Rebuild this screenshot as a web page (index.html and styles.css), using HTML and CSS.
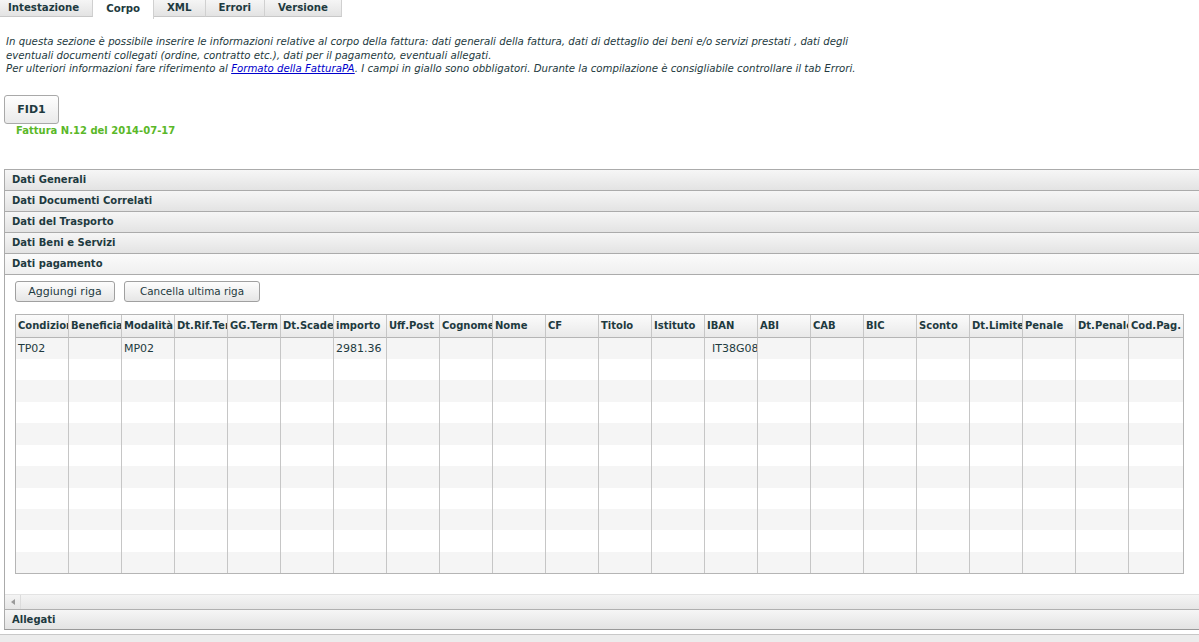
FILE: index.html
```html
<!DOCTYPE html>
<html lang="it">
<head>
<meta charset="utf-8">
<title>Corpo</title>
<link rel="stylesheet" href="styles.css">
</head>
<body>
<ul class="tab-nav">
  <li class="tab">Intestazione</li>
  <li class="tab active">Corpo</li>
  <li class="tab">XML</li>
  <li class="tab">Errori</li>
  <li class="tab">Versione</li>
</ul>
<div class="tab-panel">
  <p class="intro">In questa sezione è possibile inserire le informazioni relative al corpo della fattura: dati generali della fattura, dati di dettaglio dei beni e/o servizi prestati , dati degli<br>eventuali documenti collegati (ordine, contratto etc.), dati per il pagamento, eventuali allegati.<br>Per ulteriori informazioni fare riferimento al <a href="#" class="link">Formato della FatturaPA</a>. I campi in giallo sono obbligatori. Durante la compilazione è consigliabile controllare il tab Errori.</p>
  <button class="fid-btn">FID1</button>
  <div class="invoice">Fattura N.12 del 2014-07-17</div>

  <div class="accordion">
    <h3 class="acc-head">Dati Generali</h3>
    <h3 class="acc-head">Dati Documenti Correlati</h3>
    <h3 class="acc-head">Dati del Trasporto</h3>
    <h3 class="acc-head">Dati Beni e Servizi</h3>
    <h3 class="acc-head open">Dati pagamento</h3>
    <div class="acc-content">
      <div class="toolbar">
        <button class="btn btn-add">Aggiungi riga</button>
        <button class="btn btn-del">Cancella ultima riga</button>
      </div>
      <div class="grid">
        <div class="th">Condizioni</div><div class="th">Beneficiario</div><div class="th">Modalità</div><div class="th">Dt.Rif.Term</div><div class="th">GG.Term</div><div class="th">Dt.Scadenza</div><div class="th">importo</div><div class="th">Uff.Post</div><div class="th">Cognome</div><div class="th">Nome</div><div class="th">CF</div><div class="th">Titolo</div><div class="th">Istituto</div><div class="th">IBAN</div><div class="th">ABI</div><div class="th">CAB</div><div class="th">BIC</div><div class="th">Sconto</div><div class="th">Dt.Limite</div><div class="th">Penale</div><div class="th">Dt.Penale</div><div class="th">Cod.Pag.</div>
      </div>
      <div class="hscroll"><span class="hs-arrow"></span></div>
    </div>
    <h3 class="acc-head last">Allegati</h3>
  </div>
  <div class="footer-bar"></div>
</div>
<script src="app.js"></script>
</body>
</html>
```

FILE: app.js
```js
(function () {
  var grid = document.querySelector('.grid');
  var first = ['TP02', '', 'MP02', '', '', '', '2981.36', '', '', '', '', '', '', 'IT38G0800000292100645211', '', '', '', '', '', '', '', ''];
  for (var r = 0; r < 11; r++) {
    for (var c = 0; c < 22; c++) {
      var d = document.createElement('div');
      d.className = 'td' + (r % 2 === 0 ? ' odd' : '') + (c === 13 ? ' iban' : '');
      d.textContent = r === 0 ? first[c] : '';
      grid.appendChild(d);
    }
  }
})();
```

FILE: styles.css
```css
* { box-sizing: border-box; }

body {
  margin: 0;
  font-family: "DejaVu Sans", Verdana, sans-serif;
  color: #1e3a40;
  background: #fff;
  overflow: hidden;
}

.tab-nav {
  display: flex;
  align-items: flex-start;
  list-style: none;
  margin: 0;
  padding: 0;
  height: 19px;
}

.tab {
  height: 17px;
  line-height: 15px;
  padding: 0 13px;
  font-size: 10.2px;
  font-weight: bold;
  color: #1e3a40;
  background: linear-gradient(#f5f5f5, #e3e3e3);
  border-right: 1px solid #d0d0d0;
  border-bottom: 1px solid #c8c8c8;
}

.tab:first-child { padding-left: 8px; padding-right: 13px; }

.tab.active {
  height: 19px;
  line-height: 18px;
  background: #fff;
  border-bottom: none;
}

.intro {
  margin: 16px 0 0 6px;
  font-size: 10.2px;
  font-style: italic;
  line-height: 13.5px;
  color: #243a40;
}

.link { color: #0000cc; text-decoration: underline; }

.fid-btn {
  display: block;
  margin: 19px 0 0 4px;
  width: 55px;
  height: 29px;
  padding: 0;
  font-family: inherit;
  font-size: 11px;
  font-weight: bold;
  color: #1e3a40;
  border: 1px solid #a9a9a9;
  border-radius: 3px;
  background: linear-gradient(#fefefe, #eaeaea);
}

.invoice {
  margin-left: 16px;
  height: 13px;
  line-height: 13px;
  font-size: 10px;
  font-weight: bold;
  color: #5ab828;
}

.accordion {
  margin: 32px -20px 0 4px;
  border-top: 1px solid #ababab;
}

.acc-head {
  margin: 0;
  height: 21px;
  line-height: 20px;
  padding-left: 7px;
  font-size: 10px;
  font-weight: bold;
  color: #1e3a40;
  background: linear-gradient(#f6f6f6, #e3e3e3);
  border-left: 1px solid #ababab;
  border-bottom: 1px solid #ababab;
}

.acc-head.open { background: linear-gradient(#fbfbfb, #efefef); }

.acc-head.last {
  border-top: 1px solid #b0b0b0;
  border-bottom-color: #999;
}

.acc-content {
  border-left: 1px solid #ababab;
  padding: 6px 0 0 10px;
}

.toolbar {
  display: flex;
  gap: 9px;
  height: 21px;
}

.btn {
  height: 21px;
  padding: 0;
  white-space: nowrap;
  font-family: inherit;
  font-size: 11px;
  color: #1e3a40;
  border: 1px solid #a0a0a0;
  border-radius: 3px;
  background: linear-gradient(#fdfdfd, #e6e6e6);
}

.btn-add { width: 100px; }
.btn-del { width: 136px; font-size: 10.4px; }

.grid {
  margin-top: 12px;
  display: grid;
  grid-template-columns: repeat(21, 53px) 55px;
  grid-template-rows: 23px;
  grid-auto-rows: 21.45px;
  width: 1169px;
  border: 1px solid #b5b5b5;
  border-right: none;
}

.th, .td {
  overflow: hidden;
  white-space: nowrap;
  border-right: 1px solid #c6c6c6;
  padding-left: 2px;
}

.th {
  font-size: 10px;
  font-weight: bold;
  line-height: 21px;
  color: #1e3a40;
  background: linear-gradient(#fbfbfb, #e9e9e9);
  border-bottom: 1px solid #b5b5b5;
}

.th:nth-child(22), .td:nth-child(22n) { border-right-color: #b5b5b5; }

.td {
  font-size: 11px;
  line-height: 21px;
  color: #1e3a40;
  background: #fff;
}

.td.odd { background: #f5f5f5; }

.td.iban { padding-left: 7px; }

.hscroll {
  margin: 20px 0 0 -10px;
  height: 15px;
  background: linear-gradient(#f4f4f4, #e6e6e6);
  border-top: 1px solid #e3e3e3;
  position: relative;
}

.hs-arrow {
  position: absolute;
  left: 0;
  top: 0;
  width: 16px;
  height: 14px;
  border-right: 1px solid #dcdcdc;
}

.hs-arrow::before {
  content: "";
  position: absolute;
  left: 6px;
  top: 4px;
  border-style: solid;
  border-width: 3px 4px 3px 0;
  border-color: transparent #9a9a9a transparent transparent;
}

.footer-bar {
  margin-top: 4px;
  height: 10px;
  background: #ececec;
  border-top: 1px solid #c8c8c8;
}
```
